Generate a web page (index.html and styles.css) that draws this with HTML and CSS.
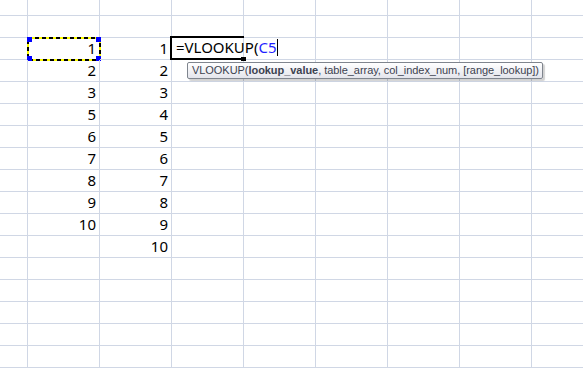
FILE: index.html
```html
<!DOCTYPE html>
<html>
<head>
<meta charset="utf-8">
<link rel="stylesheet" href="styles.css">
</head>
<body>
<div class="sheet" id="sheet"></div>
<script>
(function(){
  var sheet = document.getElementById('sheet');
  var colA = [1,2,3,5,6,7,8,9,10];
  var colB = [1,2,3,4,5,6,7,8,9,10];
  var rows = 17, cols = 9;
  for (var r = 0; r < rows; r++) {
    for (var c = 0; c < cols; c++) {
      var d = document.createElement('div');
      d.className = 'cell';
      var i = r - 2;
      if (c === 1 && i >= 0 && i < colA.length) d.textContent = colA[i];
      if (c === 2 && i >= 0 && i < colB.length) d.textContent = colB[i];
      if (c === 1 && i === 0) {
        d.classList.add('copy');
        d.innerHTML = '1<svg class="ants" width="74" height="24" viewBox="0 0 74 24"><rect x="1" y="1" width="72" height="22" fill="none" stroke="#ffff00" stroke-width="2"/><rect x="1" y="1" width="72" height="22" fill="none" stroke="#000" stroke-width="2" stroke-dasharray="4 3"/><rect x="0" y="0" width="5" height="5" fill="#0000ff"/><rect x="69" y="0" width="5" height="5" fill="#0000ff"/><rect x="0" y="19" width="5" height="5" fill="#0000ff"/><rect x="69" y="19" width="5" height="5" fill="#0000ff"/></svg>';
      }
      if (c === 3 && i === 0) {
        d.classList.add('edit');
        d.innerHTML = '<div class="editor">=VLOOKUP(<span class="ref">C5</span><span class="caret"></span></div><div class="handle"></div><div class="tip">VLOOKUP(<b>lookup_value</b>, table_array, col_index_num, [range_lookup])</div>';
      }
      sheet.appendChild(d);
    }
  }
})();
</script>
</body>
</html>
```
FILE: styles.css
```css
html, body {
  margin: 0;
  padding: 0;
  background: #fff;
  overflow: hidden;
}
.sheet {
  display: grid;
  grid-template-columns: 28px repeat(8, 72px);
  grid-template-rows: 16px repeat(16, 22px);
  font-family: "Noto Sans", "Open Sans", sans-serif;
  font-size: 15px;
  color: #000;
}
.cell {
  box-sizing: border-box;
  border-right: 1px solid #d0d7e5;
  border-bottom: 1px solid #d0d7e5;
  text-align: right;
  padding-right: 3px;
  line-height: 21px;
  position: relative;
  white-space: nowrap;
}
.copy .ants {
  position: absolute;
  left: -1px;
  top: -1px;
}
.edit { text-align: left; padding: 0; }
.editor {
  position: absolute;
  left: -2px;
  top: -2px;
  width: 74px;
  height: 24px;
  border: 2px solid #000;
  border-right: none;
  box-sizing: border-box;
  padding-left: 4px;
  line-height: 19px;
  white-space: nowrap;
  overflow: visible;
  z-index: 2;
}
.ref { color: #1f1fff; }
.caret {
  display: inline-block;
  width: 1px;
  height: 17px;
  background: #000;
  vertical-align: -3px;
  margin-left: 1px;
}
.handle {
  position: absolute;
  left: 69px;
  top: 19px;
  width: 5px;
  height: 4px;
  background: #000;
  z-index: 3;
}
.tip {
  position: absolute;
  left: 15px;
  top: 24px;
  height: 17px;
  box-sizing: border-box;
  border: 1px solid #7f858e;
  border-radius: 2px;
  background: linear-gradient(#ffffff, #e4e5ec);
  box-shadow: 2px 2px 1px rgba(0,0,0,0.18);
  font-family: "Liberation Sans", Arial, sans-serif;
  font-size: 11px;
  line-height: 15px;
  color: #3c4250;
  padding: 0 3px 0 4px;
  letter-spacing: -0.05px;
  white-space: nowrap;
  z-index: 4;
}
.tip b { font-weight: bold; }
```
